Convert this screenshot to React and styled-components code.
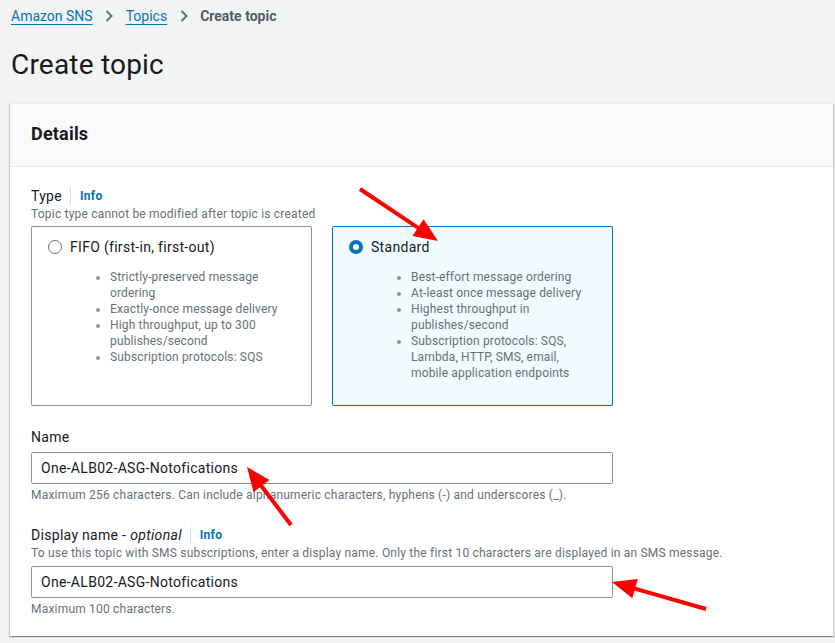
import React from 'react';
import styled, { createGlobalStyle } from 'styled-components';

const GlobalStyle = createGlobalStyle`
    html, body {
        margin: 0;
        padding: 0;
        background: #f2f3f3;
        font-family: Roboto, "Liberation Sans", sans-serif;
        color: #16191f;
    }
`;

const Page = styled.div`
    position: relative;
    width: 835px;
    height: 643px;
    overflow: hidden;
    padding: 6px 2px 0 10px;
    box-sizing: border-box;
`;

const Crumbs = styled.nav`
    display: flex;
    align-items: center;
    font-size: 14px;
    line-height: 20px;
    padding-left: 1px;

    a {
        color: #0073bb;
        text-decoration: underline;
        text-underline-offset: 3px;
    }

    span.current {
        color: #545b64;
        font-weight: 700;
    }
`;

const Chevron = styled.span`
    display: inline-flex;
    width: 33px;
    justify-content: center;
    color: #687078;
`;

const Heading = styled.h1`
    margin: 21px 0 20px 1px;
    font-size: 28px;
    line-height: 36px;
    font-weight: 400;
    color: #16191f;
    letter-spacing: 0.2px;
`;

const Card = styled.section`
    background: #fff;
    border-top: 1px solid #eaeded;
    box-shadow: 0 1px 1px 0 rgba(0, 28, 36, 0.3), 1px 1px 1px 0 rgba(0, 28, 36, 0.15),
        -1px 1px 1px 0 rgba(0, 28, 36, 0.15);
`;

const CardHeader = styled.header`
    background: #fafafa;
    border-bottom: 1px solid #eaeded;
    padding: 18px 21px;
    height: 63px;
    box-sizing: border-box;

    h2 {
        margin: 0;
        font-size: 18px;
        line-height: 24px;
        font-weight: 700;
        letter-spacing: 0.2px;
    }
`;

const CardBody = styled.div`
    padding: 19px 21px 19px;
    width: 582px;
    letter-spacing: 0.3px;
`;

const Field = styled.div`
    margin-top: ${(p) => p.$top || 0}px;
`;

const Label = styled.div`
    display: flex;
    align-items: center;
    font-size: 14px;
    line-height: 20px;
    color: #16191f;

    em {
        font-style: italic;
        margin-left: 4px;
    }
`;

const Info = styled.span`
    margin-left: 8px;
    padding-left: 9px;
    border-left: 1px solid #d5dbdb;
    line-height: 16px;
    font-size: 12px;
    font-weight: 700;
    color: #0073bb;
`;

const Hint = styled.div`
    font-size: 12px;
    line-height: 16px;
    letter-spacing: 0.2px;
    color: #687078;
    margin-top: ${(p) => p.$top || 0}px;
    white-space: nowrap;
`;

const Tiles = styled.div`
    display: grid;
    grid-template-columns: 281px 281px;
    gap: 20px;
    margin-top: 4px;
`;

const Tile = styled.div`
    height: 180px;
    box-sizing: border-box;
    border: 1px solid ${(p) => (p.$selected ? '#0073bb' : '#879596')};
    background: ${(p) => (p.$selected ? '#f1faff' : '#fff')};
    border-radius: 2px;
    padding: 10px 16px;
`;

const TileLabel = styled.div`
    display: flex;
    align-items: center;
    gap: 8px;
    font-size: 14px;
    line-height: 20px;
`;

const Radio = styled.span`
    width: 14px;
    height: 14px;
    box-sizing: border-box;
    border-radius: 50%;
    background: #fff;
    border: ${(p) => (p.$checked ? '4px solid #0073bb' : '1.5px solid #687078')};
    flex: none;
`;

const Bullets = styled.ul`
    margin: 12px 0 0 22px;
    padding-left: 40px;
    font-size: 12px;
    line-height: 16px;
    letter-spacing: 0.15px;
    color: #687078;

    li::marker {
        color: #879596;
    }
`;

const Input = styled.div`
    margin-top: 5px;
    height: 32px;
    box-sizing: border-box;
    border: 1px solid #879596;
    border-radius: 2px;
    background: #fff;
    padding: 0 9px;
    display: flex;
    align-items: center;
    font-size: 14px;
    color: #16191f;
`;

const Annotations = styled.svg`
    position: absolute;
    left: 0;
    top: 0;
    pointer-events: none;
`;

function Arrow({ x1, y1, x2, y2 }) {
    const dx = x2 - x1;
    const dy = y2 - y1;
    const len = Math.hypot(dx, dy);
    const ux = dx / len;
    const uy = dy / len;
    const head = 24;
    const half = 10;
    const bx = x2 - ux * head;
    const by = y2 - uy * head;
    const pts = [
        `${x2},${y2}`,
        `${bx - uy * half},${by + ux * half}`,
        `${bx + uy * half},${by - ux * half}`,
    ].join(' ');
    return (
        <g>
            <line x1={x1} y1={y1} x2={bx + ux * 2} y2={by + uy * 2} stroke="#f00" strokeWidth="4" />
            <polygon points={pts} fill="#f00" />
        </g>
    );
}

const fifo = [
    'Strictly-preserved message ordering',
    'Exactly-once message delivery',
    'High throughput, up to 300 publishes/second',
    'Subscription protocols: SQS',
];

const standard = [
    'Best-effort message ordering',
    'At-least once message delivery',
    'Highest throughput in publishes/second',
    <>
        Subscription protocols: SQS, Lambda, HTTP, SMS, email,
        <br />
        mobile application endpoints
    </>,
];

const ChevronIcon = () => (
    <Chevron>
        <svg width="10" height="12" viewBox="0 0 10 12">
            <path d="M2.5 1 L7.5 6 L2.5 11" fill="none" stroke="currentColor" strokeWidth="2" />
        </svg>
    </Chevron>
);

export default function App() {
    return (
        <Page>
            <GlobalStyle />
            <Crumbs>
                <a>Amazon SNS</a>
                <ChevronIcon />
                <a>Topics</a>
                <ChevronIcon />
                <span className="current">Create topic</span>
            </Crumbs>

            <Heading>Create topic</Heading>

            <Card>
                <CardHeader>
                    <h2>Details</h2>
                </CardHeader>
                <CardBody>
                    <Field>
                        <Label>
                            Type <Info>Info</Info>
                        </Label>
                        <Hint>Topic type cannot be modified after topic is created</Hint>
                        <Tiles>
                            <Tile>
                                <TileLabel>
                                    <Radio />
                                    FIFO (first-in, first-out)
                                </TileLabel>
                                <Bullets>
                                    {fifo.map((t, i) => (
                                        <li key={i}>{t}</li>
                                    ))}
                                </Bullets>
                            </Tile>
                            <Tile $selected>
                                <TileLabel>
                                    <Radio $checked />
                                    Standard
                                </TileLabel>
                                <Bullets>
                                    {standard.map((t, i) => (
                                        <li key={i}>{t}</li>
                                    ))}
                                </Bullets>
                            </Tile>
                        </Tiles>
                    </Field>

                    <Field $top={21}>
                        <Label>Name</Label>
                        <Input>One-ALB02-ASG-Notofications</Input>
                        <Hint $top={3}>
                            Maximum 256 characters. Can include alphanumeric characters, hyphens (-) and underscores (_).
                        </Hint>
                    </Field>

                    <Field $top={22}>
                        <Label>
                            Display name -<em>optional</em> <Info>Info</Info>
                        </Label>
                        <Hint>
                            To use this topic with SMS subscriptions, enter a display name. Only the first 10 characters are displayed in an SMS message.
                        </Hint>
                        <Input>One-ALB02-ASG-Notofications</Input>
                        <Hint $top={3}>Maximum 100 characters.</Hint>
                    </Field>
                </CardBody>
            </Card>

            <Annotations width="835" height="643">
                <Arrow x1={360} y1={189} x2={438} y2={241} />
                <Arrow x1={291} y1={525} x2={247} y2={467} />
                <Arrow x1={706} y1={609} x2={612} y2={582} />
            </Annotations>
        </Page>
    );
}
